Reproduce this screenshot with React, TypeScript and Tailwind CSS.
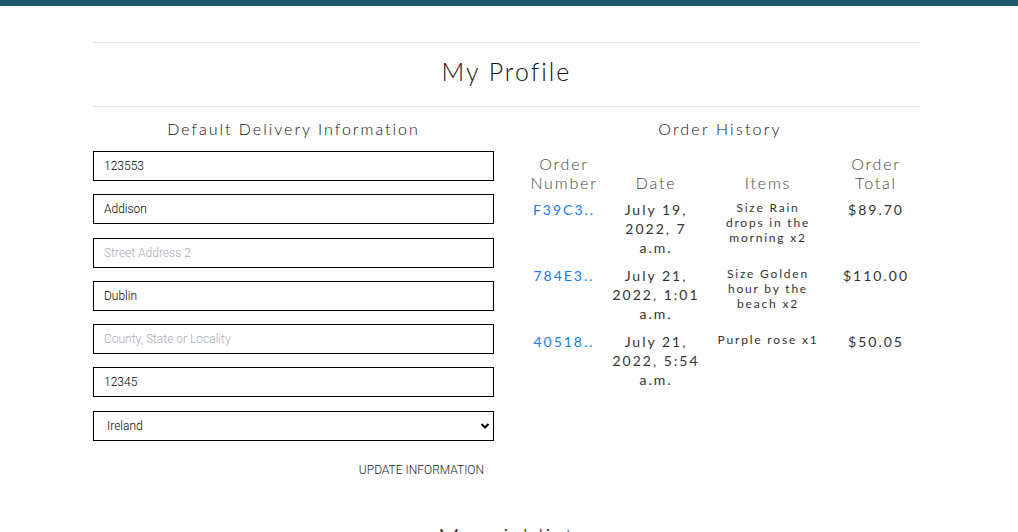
import React from "react";

const orders = [
  { id: "F39C3..", date: ["July 19,", "2022, 7", "a.m."], items: "Size Rain drops in the morning x2", total: "$89.70" },
  { id: "784E3..", date: ["July 21,", "2022, 1:01", "a.m."], items: "Size Golden hour by the beach x2", total: "$110.00" },
  { id: "40518..", date: ["July 21,", "2022, 5:54", "a.m."], items: "Purple rose x1", total: "$50.05" },
];

const fields = [
  { value: "123553", placeholder: "Phone Number" },
  { value: "Addison", placeholder: "Street Address 1" },
  { value: "", placeholder: "Street Address 2" },
  { value: "Dublin", placeholder: "Town or City" },
  { value: "", placeholder: "County, State or Locality" },
  { value: "12345", placeholder: "Postal Code" },
];

export default function App() {
  return (
    <div className="min-h-[532px] bg-white text-[#222] font-['Lato','Open_Sans',sans-serif] font-light">
      <div className="h-[6px] bg-[#1b5968]" />

      <div className="w-[827px] ml-[93px] mt-[36px]">
        <div className="h-[65px] border-y border-[#e3e3e3] flex items-center justify-center pb-[6px]">
          <h1 className="text-[25px] tracking-[2px] text-[#111]">My Profile</h1>
        </div>

        <div className="grid grid-cols-[401px_400px] gap-x-[26px]">
          {/* delivery form */}
          <div>
            <h2 className="h-[44px] flex items-center justify-center text-[16px] tracking-[2px] text-[#111] pb-[1px]">
              Default Delivery Information
            </h2>
            <form className="flex flex-col gap-[13.3px]">
              {fields.map((f) => (
                <input
                  key={f.placeholder}
                  defaultValue={f.value}
                  placeholder={f.placeholder}
                  className="h-[30px] w-full border border-black px-[10px] text-[12px] text-black placeholder:text-[#a3adb8] font-['Roboto',sans-serif] outline-none"
                />
              ))}
              <div className="relative">
                <select
                  defaultValue="Ireland"
                  className="h-[30px] w-full appearance-none border border-black pl-[13px] text-[12px] text-black bg-white font-['Roboto',sans-serif] outline-none"
                >
                  <option>Ireland</option>
                  <option>United Kingdom</option>
                  <option>United States</option>
                </select>
                <svg
                  className="absolute right-[4px] top-[11px] pointer-events-none"
                  width="10"
                  height="8"
                  viewBox="0 0 10 8"
                >
                  <path d="M1.5 2 L5 5.5 L8.5 2" fill="none" stroke="black" strokeWidth="2" />
                </svg>
              </div>
            </form>
            <div className="flex justify-end pr-[10px] mt-[20px]">
              <button className="text-[12px] uppercase text-[#222] font-['Roboto',sans-serif] font-light">
                Update Information
              </button>
            </div>
          </div>

          {/* order history */}
          <div>
            <h2 className="h-[44px] flex items-center justify-center text-[16px] tracking-[2.2px] text-[#111] pb-[1px]">
              Order History
            </h2>
            <table className="w-[400px] ml-[1px] table-fixed border-collapse text-center">
              <colgroup>
                <col className="w-[86px]" />
                <col className="w-[98px]" />
                <col className="w-[126px]" />
                <col className="w-[90px]" />
              </colgroup>
              <thead>
                <tr className="text-[16px] tracking-[1.8px] leading-[19px] text-[#444]">
                  <th className="font-light align-bottom pt-[3px] pb-[8px]">Order Number</th>
                  <th className="font-light align-bottom pt-[3px] pb-[8px]">Date</th>
                  <th className="font-light align-bottom pt-[3px] pb-[8px]">Items</th>
                  <th className="font-light align-bottom pt-[3px] pb-[8px]">Order Total</th>
                </tr>
              </thead>
              <tbody>
                {orders.map((o) => (
                  <tr key={o.id} className="align-top font-normal">
                    <td className="pb-[9px] text-[14px] tracking-[2px] leading-[19px] text-[#1a7cf0]">
                      <a href="#" className="whitespace-nowrap">{o.id}</a>
                    </td>
                    <td className="pb-[9px] px-[4px] text-[14px] tracking-[2px] leading-[19px] text-[#333]">
                      {o.date.map((d) => (
                        <div key={d}>{d}</div>
                      ))}
                    </td>
                    <td className="pb-[9px] px-[10px] text-[12px] tracking-[1.8px] leading-[15px] text-[#333]">
                      {o.items}
                    </td>
                    <td className="pb-[9px] text-[14px] tracking-[2px] leading-[19px] text-[#333]">
                      {o.total}
                    </td>
                  </tr>
                ))}
              </tbody>
            </table>
          </div>
        </div>

        <h2 className="mt-[40px] text-center text-[24px] tracking-[2px] text-[#222]">My wishlist</h2>
      </div>
    </div>
  );
}
